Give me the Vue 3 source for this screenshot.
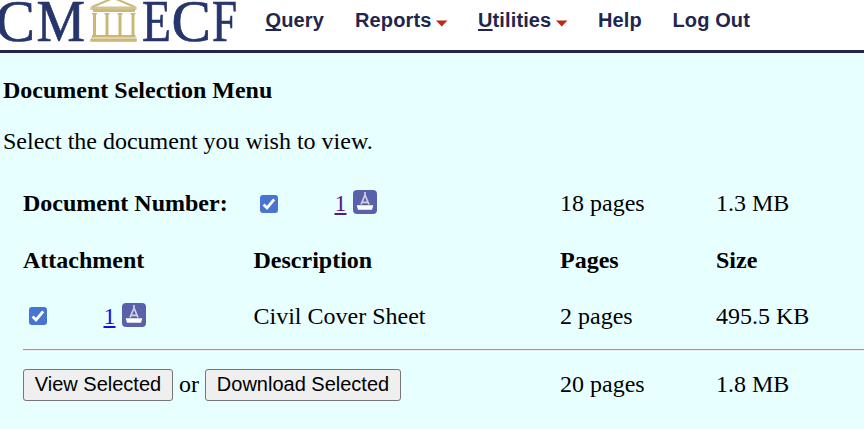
<script setup>
const menu = [
  { key: 'Q', rest: 'uery', width: 89.5 },
  { key: '', rest: 'Reports', arrow: true, width: 123 },
  { key: 'U', rest: 'tilities', arrow: true, width: 120 },
  { key: '', rest: 'Help', width: 74.5 },
  { key: '', rest: 'Log Out', width: 100 }
]
</script>

<template>
  <div class="page">
    <header class="bar">
      <svg class="logo" width="240" height="50" viewBox="0 0 240 50" aria-label="CM ECF">
        <g class="letters">
          <text x="-4.5" y="41" textLength="39.5" lengthAdjust="spacingAndGlyphs">C</text>
          <text x="36.5" y="41" textLength="48.5" lengthAdjust="spacingAndGlyphs">M</text>
          <text x="142" y="41" textLength="29" lengthAdjust="spacingAndGlyphs">E</text>
          <text x="171.5" y="41" textLength="39.5" lengthAdjust="spacingAndGlyphs">C</text>
          <text x="212" y="41" textLength="25" lengthAdjust="spacingAndGlyphs">F</text>
        </g>
        <path d="M92 7 L113.5 -2 L135 7" fill="none" stroke="#c9b878" stroke-width="2" />
        <g fill="#c9b878">
          <rect x="90.5" y="6.5" width="46" height="3.5" fill="#d2c48e" />
          <rect x="93" y="9.5" width="42" height="2.5" />
          <rect x="92" y="13" width="5" height="1.5" /><rect x="93" y="13" width="3" height="22.5" />
          <rect x="104.5" y="13" width="5" height="1.5" /><rect x="105.5" y="13" width="3" height="22.5" />
          <rect x="117.5" y="13" width="5" height="1.5" /><rect x="118.5" y="13" width="3" height="22.5" />
          <rect x="130.5" y="13" width="5" height="1.5" /><rect x="131.5" y="13" width="3" height="22.5" />
          <rect x="92" y="35" width="43.5" height="2" />
          <rect x="91" y="37" width="45.5" height="2" fill="#dfd5ac" />
          <rect x="90.3" y="39" width="46.5" height="2.8" />
        </g>
      </svg>
      <nav>
        <a v-for="item in menu" :key="item.rest" :style="{ width: item.width + 'px' }">
          <span><span class="access">{{ item.key }}</span>{{ item.rest }}</span>
          <svg v-if="item.arrow" class="arrow" width="12" height="7" viewBox="0 0 12 7"><path d="M0 .5H11.5L5.75 6.5Z" fill="#b92b17" /></svg>
        </a>
      </nav>
    </header>

    <main>
      <h1>Document Selection Menu</h1>
      <p>Select the document you wish to view.</p>

      <section class="table">
        <div class="row document">
          <div class="number">
            <b>Document Number:</b>
            <span class="check"><svg viewBox="0 0 18 18"><path d="M3.6 9.6 7 13 14.2 4.3" /></svg></span>
            <a class="link visited">1</a>
            <span class="boat"><svg viewBox="0 0 24 24"><path class="rig" d="M12 2V6M12 5 8 14.5M12 5 16 14.5M9.2 12.4H14.8" /><path class="hull" d="M3.7 15.3H20.3L19 19.7H5Z" /></svg></span>
          </div>
          <span>18 pages</span><span>1.3 MB</span>
        </div>
        <div class="row heading"><b>Attachment</b><b>Description</b><b>Pages</b><b>Size</b></div>
        <div class="row attachment">
          <div class="number">
            <span class="check"><svg viewBox="0 0 18 18"><path d="M3.6 9.6 7 13 14.2 4.3" /></svg></span>
            <a class="link">1</a>
            <span class="boat"><svg viewBox="0 0 24 24"><path class="rig" d="M12 2V6M12 5 8 14.5M12 5 16 14.5M9.2 12.4H14.8" /><path class="hull" d="M3.7 15.3H20.3L19 19.7H5Z" /></svg></span>
          </div>
          <span>Civil Cover Sheet</span><span>2 pages</span><span>495.5 KB</span>
        </div>
        <div class="rule"></div>
        <div class="row total">
          <div class="actions"><button class="view">View Selected</button><span>or</span><button class="download">Download Selected</button></div>
          <span>20 pages</span><span>1.8 MB</span>
        </div>
      </section>
    </main>
  </div>
</template>

<style>
body { margin: 0; background: #e8ffff; overflow: hidden; }
</style>

<style scoped>
.page { width: 864px; height: 429px; overflow: hidden; background: #e8ffff; color: #000; font: 24px/28px "Liberation Serif", serif; }
.bar { box-sizing: border-box; height: 53px; display: flex; background: #fff; border-bottom: 3px solid #22264f; }
.logo { flex: none; display: block; }
.letters { font: 58.5px "Liberation Serif", serif; fill: #26366b; stroke: #26366b; stroke-width: .7px; }
nav { display: flex; padding: 8px 0 0 25.5px; font: bold 20px/24px "Liberation Sans", sans-serif; color: #22264f; letter-spacing: .12px; }
nav a { flex: none; white-space: nowrap; }
.access { text-decoration: underline; text-decoration-thickness: 2px; text-underline-offset: 2px; text-decoration-skip-ink: none; }
.arrow { margin-left: 4.5px; vertical-align: 0; }
main { padding: 23px 0 0 3px; }
h1 { margin: 0; font-size: 24px; line-height: 28px; }
p { margin: 23px 0 34px; }
.table { margin-left: 20px; }
.row { display: grid; grid-template-columns: 230.5px 306.5px 156px 145px; height: 28px; white-space: nowrap; }
.document, .total { grid-template-columns: 537px 156px 145px; }
.heading { margin-top: 29px; }
.attachment { margin-top: 28px; }
.number { display: flex; }
.document b { width: 237px; }
.check { width: 18px; height: 18px; margin-top: 6px; border-radius: 3px; background: #4775d1; }
.attachment .check { margin: 5px 0 0 6px; }
.check svg { display: block; width: 18px; height: 18px; }
.check path { fill: none; stroke: #fff; stroke-width: 2.8; }
.link { margin-left: 56.5px; color: #1a0ce8; text-decoration: underline; text-decoration-thickness: 2px; text-underline-offset: 2px; }
.visited { color: #551a8b; }
.boat { width: 24px; height: 24px; margin: 1px 0 0 6.5px; border-radius: 4px; background: #5962a9; }
.boat svg { display: block; width: 24px; height: 24px; }
.rig { fill: none; stroke: #cfd1e7; stroke-width: 1.7; }
.hull { fill: #fff; }
.rule { height: 1px; margin-top: 19px; border-top: 1px solid #999; background: #eee; }
.total { margin-top: 19px; }
.actions { display: flex; align-items: flex-start; }
.actions span { margin: 0 6px; width: 20px; }
button { box-sizing: border-box; height: 32px; margin: -1px 0 0; padding: 0 0 2px; border: 1px solid #767676; border-radius: 3px; background: #efefef; color: #000; font: 20px/24px "Liberation Sans", sans-serif; }
.view { width: 150px; }
.download { width: 196px; }
</style>
